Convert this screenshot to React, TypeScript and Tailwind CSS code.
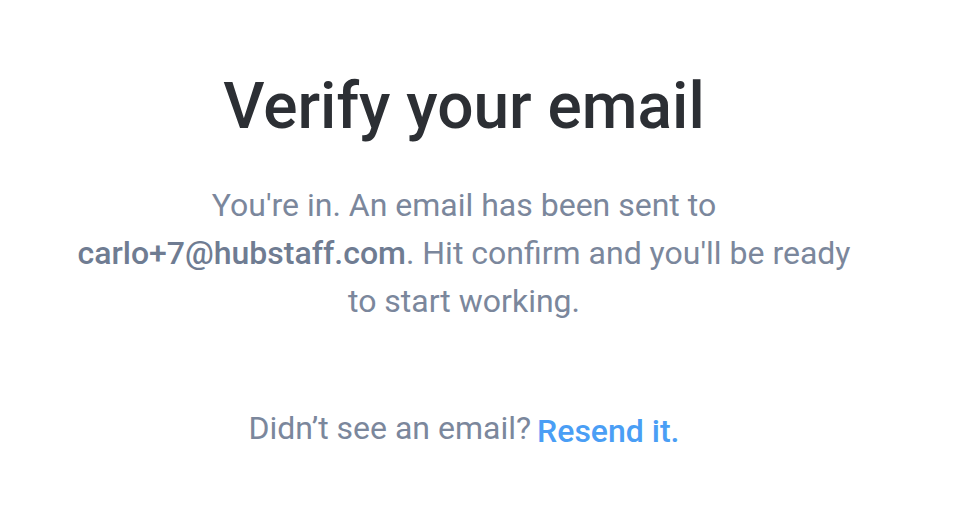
export default function App() {
  return (
    <div className="min-h-[508px] w-full bg-white pr-8 font-['Roboto',sans-serif]">
      <div className="flex flex-col items-center pt-[63px] text-center">
        <h1 className="text-[64px] leading-[88px] font-medium text-[#2c2f34]">
          Verify your email
        </h1>
        <p className="mt-[30px] max-w-[790px] text-[32px] leading-[48px] text-[#7b879c]">
          You're in. An email has been sent to{" "}
          <span className="font-medium text-[#6f7c92]">carlo+7@hubstaff.com</span>. Hit confirm and you'll
          be ready to start working.
        </p>
        <div className="mt-[75px] flex items-center gap-[6px] text-[32px] leading-[48px]">
          <span className="text-[#7b879c]">Didn’t see an email?</span>
          <button className="mt-[7px] font-medium text-[#4a9ef5]">Resend it.</button>
        </div>
      </div>
    </div>
  );
}
